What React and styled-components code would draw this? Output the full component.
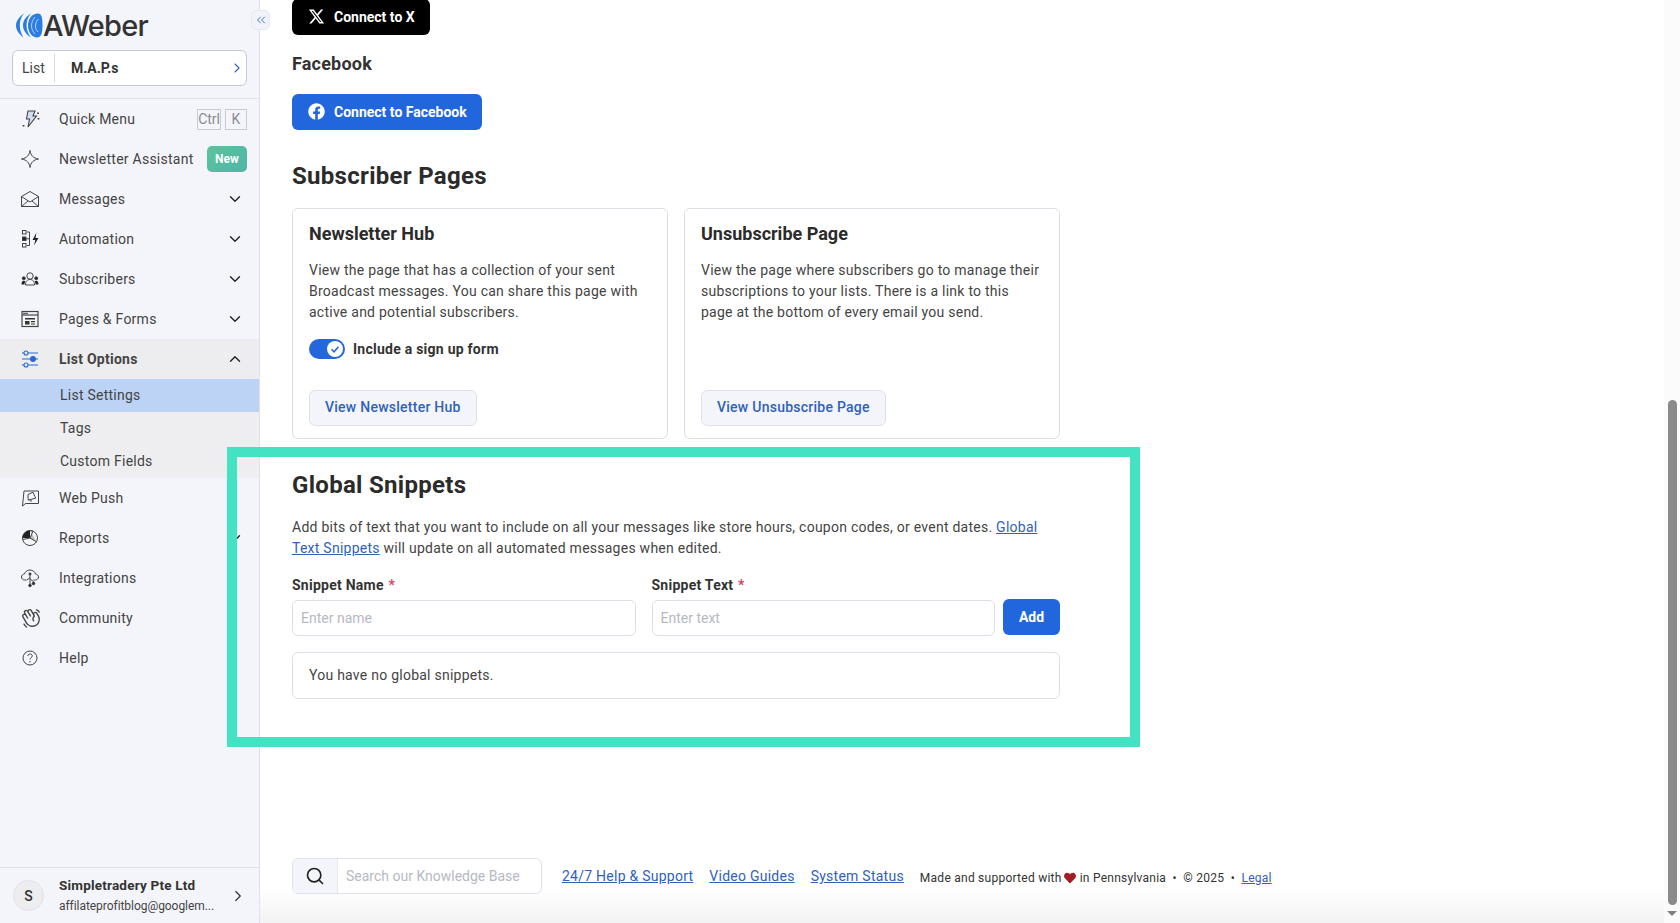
import React from 'react'
import styled, { createGlobalStyle } from 'styled-components'
import { ChevronDown, ChevronUp, ChevronRight, ChevronsLeft, Search } from 'lucide-react'
import { FaFacebook, FaHeart } from 'react-icons/fa'
import { FaXTwitter } from 'react-icons/fa6'
import { PiHandWaving } from 'react-icons/pi'

const GlobalStyle = createGlobalStyle`
  html, body { margin: 0; height: 100%; overflow: hidden; background: #fff; }
  body { font-family: Roboto, "Liberation Sans", sans-serif; color: #333; }
  * { box-sizing: border-box; }
`

// icons that the packages don't have
const QuickIcon = () => (
  <svg width="22" height="22" viewBox="0 0 22 22" fill="none" stroke="#444" strokeWidth="1.100">
    <path d="M8 3h7l-2 5h3.500L8 19l1.500-8H6.500z" fill="#d3def5" />
    <path d="M18 4.500v1.500 M18.500 10v1.500 M3.500 17v1.500" strokeWidth="1.800" />
  </svg>
)
const StarIcon = () => (
  <svg width="20" height="20" viewBox="0 0 20 20" fill="none" stroke="#444" strokeWidth="1">
    <path d="M10 1.500c.8 5 3 7.500 8.500 8.500-5.500 1-7.700 3.500-8.500 8.500-.8-5-3-7.500-8.500-8.500 5.500-1 7.700-3.500 8.500-8.500z" />
  </svg>
)
const EnvelopeIcon = () => (
  <svg width="20" height="20" viewBox="0 0 20 20" fill="none" stroke="#444" strokeWidth="1">
    <path d="M1.500 7.500L10 2.500l8.500 5v10h-17z" />
    <path d="M1.500 7.500l8.500 5.500 8.500-5.500 M1.500 17.500l6.500-5.500 M18.500 17.500L12 12" />
  </svg>
)
const AutomationIcon = () => (
  <svg width="20" height="20" viewBox="0 0 20 20" fill="none" stroke="#444" strokeWidth="1">
    <rect x="2.500" y="1.500" width="3.500" height="3.500" />
    <rect x="2.500" y="8" width="3.500" height="3.500" fill="#222" />
    <rect x="2.500" y="14.500" width="3.500" height="3.500" />
    <path d="M7 3h2.500v13.500H7 M6 9.800h3.500" />
    <path d="M16.500 3.500l-4 7.500h2.800l-1.300 5.500 4.500-7.500h-3z" fill="#222" stroke="none" />
  </svg>
)
const SubscribersIcon = () => (
  <svg width="20" height="20" viewBox="0 0 20 20" fill="none" stroke="#444" strokeWidth="1">
    <circle cx="10" cy="7" r="3.200" />
    <path d="M5.500 16c0-4 2-5.500 4.500-5.500s4.500 1.500 4.500 5.500z" />
    <circle cx="3.800" cy="9.300" r="1.500" fill="#222" />
    <circle cx="16.200" cy="9.300" r="1.500" fill="#222" />
    <path d="M1.500 15.500c0-2.700 1-3.700 2.500-3.700.6 0 1 .2 1.300.4-.5 1-.8 2-.8 3.300z M18.500 15.500c0-2.700-1-3.700-2.500-3.700-.6 0-1 .2-1.300.4.500 1 .8 2 .8 3.300z" fill="#222" stroke="none" />
  </svg>
)
const PagesIcon = () => (
  <svg width="20" height="20" viewBox="0 0 20 20" fill="none" stroke="#444" strokeWidth="1.200">
    <rect x="2" y="2.500" width="16" height="15" />
    <path d="M2 6h16" />
    <path d="M3 4.300h5" strokeWidth="1" />
    <path d="M5 9h10v1.600H5z M5 12h4.500v3.500H5z M11 12h4v1.300h-4z M11 14.500h4v1h-4z" fill="#333" stroke="none" />
  </svg>
)
const SlidersIcon = () => (
  <svg width="20" height="20" viewBox="0 0 20 20" fill="none" stroke="#2a66d6" strokeWidth="1.100">
    <circle cx="6" cy="4" r="2" />
    <path d="M2 4h2 M8 4h10" />
    <circle cx="13" cy="10" r="2.400" fill="#2a66d6" />
    <path d="M2 10h9 M15 10h3" />
    <circle cx="6" cy="16" r="2" />
    <path d="M2 16h2 M8 16h10" />
  </svg>
)
const PushIcon = () => (
  <svg width="20" height="20" viewBox="0 0 20 20" fill="none" stroke="#444" strokeWidth="1">
    <path d="M4 3h14.500v12.500H5.500L2.500 18z" />
    <path d="M8 6.500l5-2.300 1.800 4.200 1 1.700-7.500 2-.2-2z M9.500 12c.4 1.200 1.500 1.300 2.500.8" />
  </svg>
)
const PieIcon = () => (
  <svg width="20" height="20" viewBox="0 0 20 20" fill="none" stroke="#444" strokeWidth="1">
    <circle cx="10" cy="10" r="7.500" />
    <path d="M10 10V2.500A7.500 7.500 0 0 0 2.500 10z" fill="#222" stroke="none" />
    <path d="M10 2.500c1 0 2 .2 3 .7l-3 6.800 6.500 3.800" fill="#bbb" />
    <path d="M10 10l-7 1.500" />
  </svg>
)
const CloudIcon = () => (
  <svg width="20" height="20" viewBox="0 0 20 20" fill="none" stroke="#444" strokeWidth="1">
    <path d="M6.500 12H4.800C2.900 12 1.500 10.600 1.500 9s1.300-2.900 3-3C5.200 3.700 7.300 2 10 2s4.800 1.700 5.500 4c1.700.1 3 1.400 3 3s-1.400 3-3.300 3h-1.700" />
    <path d="M10 6v11.500 M10 11l3.500 2.500v1.500 M10 9.500L7 12" />
    <circle cx="10" cy="6" r="1.100" fill="#222" />
    <circle cx="10" cy="17.500" r="1.300" fill="#222" />
    <circle cx="13.500" cy="15.500" r="1.300" fill="#222" />
  </svg>
)
const HelpIcon = () => (
  <svg width="20" height="20" viewBox="0 0 20 20" fill="none" stroke="#444" strokeWidth="1">
    <circle cx="10" cy="10" r="7" />
    <path d="M7.800 8c.2-1.300 1.100-2 2.300-2 1.300 0 2.200.8 2.200 1.900 0 1.700-2.300 1.800-2.300 3.600" />
    <circle cx="10" cy="13.800" r=".7" fill="#444" stroke="none" />
  </svg>
)
const LogoMark = () => (
  <svg width="28" height="25" viewBox="0 0 28 25" fill="#2a7de1">
    <path d="M8 .5C3 4 0 8 0 12.500 0 17 3 21 7.500 24.500 5 20.500 3.800 16.500 3.800 12.500 3.800 8 5 4 8 .5z" />
    <path d="M15 .5C10 3.500 7 7.500 7 12.500c0 4.500 3 9 8 12-2.500-3-4.500-7.500-4.500-12S12 4 15 .5z" />
    <path d="M22 .5c-6 0-10 5.500-10 12s4 12 9 12c4 0 5.500-4 5.500-12S25.500.5 22 .5z" />
    <path d="M19 4c-2.500 3-3.500 6-3.500 9s1.500 6 3.500 8 M22.500 6c-2 2-3 4.500-3 7s1 4.500 2.500 6" fill="none" stroke="#c4dbf6" strokeWidth=".9" />
  </svg>
)

const navTop = [
  { label: 'Quick Menu', icon: <QuickIcon />, keys: ['Ctrl', 'K'] },
  { label: 'Newsletter Assistant', icon: <StarIcon />, badge: 'New' },
  { label: 'Messages', icon: <EnvelopeIcon />, more: true },
  { label: 'Automation', icon: <AutomationIcon />, more: true },
  { label: 'Subscribers', icon: <SubscribersIcon />, more: true },
  { label: 'Pages & Forms', icon: <PagesIcon />, more: true },
]
const navBottom = [
  { label: 'Web Push', icon: <PushIcon /> },
  { label: 'Reports', icon: <PieIcon />, more: true },
  { label: 'Integrations', icon: <CloudIcon /> },
  { label: 'Community', icon: <PiHandWaving size={22} color="#444" /> },
  { label: 'Help', icon: <HelpIcon /> },
]

const NavRow = ({ item }) => (
  <NavItem>
    <NavIcon>{item.icon}</NavIcon>
    <NavLabel>{item.label}</NavLabel>
    {item.keys && (
      <Keys>
        {item.keys.map(k => <Key key={k}>{k}</Key>)}
      </Keys>
    )}
    {item.badge && <Badge>{item.badge}</Badge>}
    {item.more && <NavCaret><ChevronDown size={18} color="#222" strokeWidth={1.8} /></NavCaret>}
  </NavItem>
)

export default function App() {
  return (
    <Page>
      <GlobalStyle />
      <Sidebar>
        <LogoRow>
          <LogoMark />
          <LogoText>AWeber</LogoText>
        </LogoRow>
        <ListPicker>
          <PickerLabel>List</PickerLabel>
          <PickerValue>M.A.P.s</PickerValue>
          <ChevronRight size={16} color="#2f62b8" strokeWidth={1.6} />
        </ListPicker>
        <Nav>
          {navTop.map(item => <NavRow key={item.label} item={item} />)}
          <NavItem $open>
            <NavIcon><SlidersIcon /></NavIcon>
            <NavLabel $bold>List Options</NavLabel>
            <NavCaret><ChevronUp size={18} color="#222" strokeWidth={1.8} /></NavCaret>
          </NavItem>
          <SubList>
            <SubItem $active>List Settings</SubItem>
            <SubItem>Tags</SubItem>
            <SubItem>Custom Fields</SubItem>
          </SubList>
          {navBottom.map(item => <NavRow key={item.label} item={item} />)}
        </Nav>
        <Account>
          <Avatar>S</Avatar>
          <AccountText>
            <AccountName>Simpletradery Pte Ltd</AccountName>
            <AccountMail>affilateprofitblog@googlem...</AccountMail>
          </AccountText>
          <ChevronRight size={18} color="#333" strokeWidth={1.6} />
        </Account>
      </Sidebar>
      <CollapseButton><ChevronsLeft size={14} color="#2f62b8" strokeWidth={1.5} /></CollapseButton>

      <Main>
        <Content>
          <SocialButton $dark><FaXTwitter size={17} /> Connect to X</SocialButton>
          <SubHeading>Facebook</SubHeading>
          <SocialButton><FaFacebook size={17} /> Connect to Facebook</SocialButton>
          <SectionHeading>Subscriber Pages</SectionHeading>
          <Cards>
            <Card>
              <CardTitle>Newsletter Hub</CardTitle>
              <CardText>View the page that has a collection of your sent Broadcast messages. You can share this page with active and potential subscribers.</CardText>
              <ToggleRow>
                <Toggle>
                  <ToggleKnob>
                    <svg width="12" height="12" viewBox="0 0 12 12" fill="none" stroke="#2466dc" strokeWidth="1.500"><path d="M2.500 6.300l2.500 2.500 4.500-5" /></svg>
                  </ToggleKnob>
                </Toggle>
                <ToggleLabel>Include a sign up form</ToggleLabel>
              </ToggleRow>
              <GhostButton>View Newsletter Hub</GhostButton>
            </Card>
            <Card>
              <CardTitle>Unsubscribe Page</CardTitle>
              <CardText>View the page where subscribers go to manage their subscriptions to your lists. There is a link to this page at the bottom of every email you send.</CardText>
              <GhostButton>View Unsubscribe Page</GhostButton>
            </Card>
          </Cards>
          <SnippetHeading>Global Snippets</SnippetHeading>
          <Intro>
            Add bits of text that you want to include on all your messages like store hours, coupon codes, or event dates. <TextLink>Global</TextLink> <TextLink>Text Snippets</TextLink> will update on all automated messages when edited.
          </Intro>
          <SnippetForm>
            <Field>
              <FieldLabel>Snippet Name <Required>*</Required></FieldLabel>
              <Input placeholder="Enter name" />
            </Field>
            <Field>
              <FieldLabel>Snippet Text <Required>*</Required></FieldLabel>
              <Input placeholder="Enter text" />
            </Field>
            <AddButton>Add</AddButton>
          </SnippetForm>
          <EmptyBox>You have no global snippets.</EmptyBox>
        </Content>

        <Footer>
          <SearchBox>
            <SearchIcon><Search size={20} color="#222" strokeWidth={2} /></SearchIcon>
            <SearchInput placeholder="Search our Knowledge Base" />
          </SearchBox>
          <FooterLink>24/7 Help &amp; Support</FooterLink>
          <FooterLink>Video Guides</FooterLink>
          <FooterLink>System Status</FooterLink>
          <Made>
            Made and supported with<Heart><FaHeart size={12} color="#a31d24" /></Heart>in Pennsylvania &nbsp;•&nbsp; © 2025 &nbsp;•&nbsp; <LegalLink>Legal</LegalLink>
          </Made>
        </Footer>
      </Main>

      <ScrollTrack>
        <ScrollThumb />
        <ScrollArrow />
      </ScrollTrack>
      <Highlight />
    </Page>
  )
}

const Page = styled.div`
  display: flex;
  height: 100vh;
  position: relative;
  overflow: hidden;
`

const Sidebar = styled.aside`
  width: 260px;
  flex: none;
  display: flex;
  flex-direction: column;
  background: #f4f5fa;
  border-right: 1px solid #dfe1ea;
`

const LogoRow = styled.div`
  height: 50px;
  padding: 8px 0 0 16px;
  display: flex;
  align-items: flex-start;
  svg { margin-top: 5px; flex: none; }
`

const LogoText = styled.span`
  font-family: Inter, Roboto, sans-serif;
  font-size: 29px;
  line-height: 36px;
  font-weight: 500;
  letter-spacing: -0.8px;
  color: #333;
  margin-left: -1px;
`

const ListPicker = styled.div`
  margin: 0 12px;
  height: 36px;
  display: flex;
  align-items: center;
  padding-right: 1px;
  background: #fff;
  border: 1px solid #c7cad6;
  border-radius: 6px;
`

const PickerLabel = styled.span`
  width: 42px;
  padding-left: 9px;
  font-size: 14px;
  line-height: 28px;
  color: #444;
  border-right: 1px solid #d5d7e0;
`

const PickerValue = styled.span`
  flex: 1;
  padding-left: 16px;
  font-size: 14px;
  font-weight: 700;
  color: #333;
`

const Nav = styled.nav`
  margin-top: 12px;
  border-top: 1px solid #dfe1ea;
  flex: 1;
`

const NavItem = styled.div`
  height: 40px;
  display: flex;
  align-items: center;
  padding: 0 12px 0 20px;
  background: ${p => (p.$open ? '#ededf0' : 'transparent')};
`

const NavIcon = styled.span`
  width: 39px;
  flex: none;
  display: flex;
`

const NavLabel = styled.span`
  flex: 1;
  font-size: 14px;
  letter-spacing: 0.25px;
  color: #444;
  font-weight: ${p => (p.$bold ? 700 : 400)};
`

const NavCaret = styled.span`
  display: flex;
  margin-right: 3px;
`

const Keys = styled.span`
  display: flex;
  gap: 4px;
`

const Key = styled.span`
  height: 21px;
  min-width: 22px;
  display: flex;
  align-items: center;
  justify-content: center;
  border: 1px solid #c9cbd3;
  font-size: 14px;
  color: #8a8c94;
`

const Badge = styled.span`
  width: 40px;
  height: 26px;
  display: flex;
  align-items: center;
  justify-content: center;
  border-radius: 5px;
  background: linear-gradient(135deg, #5cc39d, #4fb5a8);
  color: #fff;
  font-size: 12px;
  font-weight: 700;
`

const SubList = styled.div`
  background: #eeeef1;
`

const SubItem = styled.div`
  height: 33px;
  display: flex;
  align-items: center;
  padding: 0 0 1px 60px;
  font-size: 14px;
  letter-spacing: 0.25px;
  color: #444;
  background: ${p => (p.$active ? '#bcd3f5' : 'transparent')};
`

const Account = styled.div`
  height: 56px;
  display: flex;
  align-items: center;
  padding: 0 12px 0 13px;
  border-top: 1px solid #dfe1ea;
`

const Avatar = styled.span`
  width: 31px;
  height: 31px;
  flex: none;
  display: flex;
  align-items: center;
  justify-content: center;
  border-radius: 50%;
  background: #ededf0;
  border: 1px solid #e0e1e8;
  font-size: 14px;
  font-weight: 500;
  color: #333;
`

const AccountText = styled.div`
  flex: 1;
  padding: 0 0 1px 15px;
  min-width: 0;
`

const AccountName = styled.div`
  font-size: 13.500px;
  line-height: 20px;
  font-weight: 700;
  letter-spacing: 0.2px;
  color: #333;
`

const AccountMail = styled.div`
  margin-top: 1px;
  font-size: 12px;
  line-height: 20px;
  letter-spacing: -0.05px;
  color: #444;
  white-space: nowrap;
`

const CollapseButton = styled.span`
  position: absolute;
  left: 251px;
  top: 10px;
  width: 19px;
  height: 20px;
  display: flex;
  align-items: center;
  justify-content: center;
  background: #f0f3fa;
  border: 1px solid #e6e8f0;
  border-radius: 5px;
`

const Main = styled.main`
  flex: 1;
  min-width: 0;
  display: flex;
  flex-direction: column;
  justify-content: space-between;
  background: #fff;
`

const Content = styled.div`
  width: 800px;
  padding-left: 32px;
  margin-top: -1px;
`

const SocialButton = styled.button`
  height: 36px;
  display: flex;
  align-items: center;
  gap: 9px;
  padding: 0 15px 1px 16px;
  border: none;
  border-radius: 6px;
  background: ${p => (p.$dark ? '#000' : '#2266dd')};
  color: #fff;
  font-family: inherit;
  font-size: 14px;
  font-weight: 700;
`

const SubHeading = styled.h3`
  margin: 16px 0 17px;
  font-size: 18px;
  line-height: 26px;
  font-weight: 700;
  letter-spacing: 0.2px;
  color: #333;
`

const SectionHeading = styled.h2`
  margin: 29px 0 15px;
  font-size: 24px;
  line-height: 34px;
  font-weight: 700;
  letter-spacing: 0.3px;
  color: #2b2b2b;
`

const Cards = styled.div`
  display: grid;
  grid-template-columns: 1fr 1fr;
  gap: 16px;
`

const Card = styled.section`
  height: 231px;
  display: flex;
  flex-direction: column;
  align-items: flex-start;
  padding: 13px 16px 12px;
  border: 1px solid #dddfe7;
  border-radius: 6px;
`

const CardTitle = styled.h3`
  margin: 0 0 14px;
  font-size: 18px;
  line-height: 24px;
  font-weight: 700;
  color: #2b2b2b;
`

const CardText = styled.p`
  margin: 0;
  font-size: 14px;
  line-height: 21px;
  letter-spacing: 0.25px;
  color: #444;
`

const ToggleRow = styled.div`
  display: flex;
  align-items: center;
  gap: 8px;
  margin-top: 16px;
`

const Toggle = styled.span`
  width: 36px;
  height: 20px;
  display: flex;
  align-items: center;
  justify-content: flex-end;
  padding-right: 2px;
  border-radius: 10px;
  background: #2466dc;
`

const ToggleKnob = styled.span`
  width: 16px;
  height: 16px;
  display: flex;
  align-items: center;
  justify-content: center;
  border-radius: 50%;
  background: #fff;
`

const ToggleLabel = styled.span`
  font-size: 14px;
  font-weight: 700;
  letter-spacing: 0.25px;
  color: #333;
`

const GhostButton = styled.button`
  margin-top: auto;
  height: 36px;
  padding: 0 15px 2px;
  background: #f4f5fa;
  border: 1px solid #dfe1ea;
  border-radius: 6px;
  font-family: inherit;
  font-size: 14px;
  font-weight: 500;
  letter-spacing: 0.25px;
  color: #2f62b8;
`

const SnippetHeading = styled(SectionHeading)`
  margin: 29px 0 15px;
`

const Intro = styled.p`
  margin: 0;
  font-size: 14px;
  line-height: 21px;
  letter-spacing: 0.25px;
  color: #444;
`

const TextLink = styled.a`
  color: #2f62b8;
  text-decoration: underline;
`

const SnippetForm = styled.div`
  display: flex;
  align-items: flex-end;
  gap: 16px;
  margin-top: 16px;
`

const Field = styled.label`
  flex: 1;
  min-width: 0;
  display: flex;
  flex-direction: column;
  gap: 4px;
`

const FieldLabel = styled.span`
  font-size: 14px;
  line-height: 21px;
  font-weight: 700;
  letter-spacing: 0.25px;
  color: #333;
`

const Required = styled.span`
  color: #d9435a;
  margin-left: 1px;
`

const Input = styled.input`
  width: 100%;
  height: 36px;
  padding: 0 8px 1px;
  border: 1px solid #dddfe7;
  border-radius: 6px;
  outline: none;
  font-family: inherit;
  font-size: 14px;
  &::placeholder { color: #b6b9c4; opacity: 1; }
`

const AddButton = styled.button`
  width: 57px;
  height: 36px;
  margin: 0 0 1px -8px;
  border: none;
  border-radius: 6px;
  background: #2266dd;
  color: #fff;
  font-family: inherit;
  font-size: 14px;
  font-weight: 700;
`

const EmptyBox = styled.div`
  height: 47px;
  margin-top: 16px;
  display: flex;
  align-items: center;
  padding: 0 0 1px 16px;
  border: 1px solid #dddfe7;
  border-radius: 6px;
  font-size: 14px;
  letter-spacing: 0.25px;
  color: #444;
`

const Footer = styled.footer`
  display: flex;
  align-items: center;
  padding: 0 0 29px 32px;
  background: linear-gradient(to bottom, #fff 0, #fff 45%, #f3f3f3 100%);
`

const SearchBox = styled.div`
  width: 250px;
  height: 36px;
  flex: none;
  display: flex;
  border: 1px solid #dfe1ea;
  border-radius: 6px;
  overflow: hidden;
  background: #fff;
`

const SearchIcon = styled.span`
  width: 45px;
  flex: none;
  display: flex;
  align-items: center;
  justify-content: center;
  background: #f4f5fa;
  border-right: 1px solid #e6e8f0;
`

const SearchInput = styled.input`
  flex: 1;
  min-width: 0;
  padding: 0 8px;
  border: none;
  outline: none;
  background: transparent;
  font-family: inherit;
  font-size: 14px;
  &::placeholder { color: #b6b9c4; opacity: 1; }
`

const FooterLink = styled.a`
  margin-left: 16px;
  font-size: 14px;
  letter-spacing: 0.25px;
  color: #2f62b8;
  text-decoration: underline;
  white-space: nowrap;
  &:first-of-type { margin-left: 20px; }
`

const Made = styled.span`
  margin: 3px 0 0 16px;
  font-size: 12px;
  letter-spacing: 0.25px;
  white-space: pre;
  color: #333;
`

const Heart = styled.span`
  margin: 0 4px 0 2px;
  svg { vertical-align: -2px; }
`

const LegalLink = styled.a`
  color: #2f62b8;
  text-decoration: underline;
`

const ScrollTrack = styled.div`
  width: 16px;
  flex: none;
  display: flex;
  flex-direction: column;
  align-items: center;
  padding-top: 400px;
  background: #fbfbfb;
`

const ScrollThumb = styled.div`
  width: 9px;
  height: 505px;
  border-radius: 5px;
  background: #8a8a8a;
`

const ScrollArrow = styled.div`
  margin-top: 6px;
  border-left: 5px solid transparent;
  border-right: 5px solid transparent;
  border-top: 5px solid #7f7f7f;
`

const Highlight = styled.div`
  position: absolute;
  left: 227px;
  top: 447px;
  width: 913px;
  height: 300px;
  border: 10px solid #42e2c2;
  pointer-events: none;
`
